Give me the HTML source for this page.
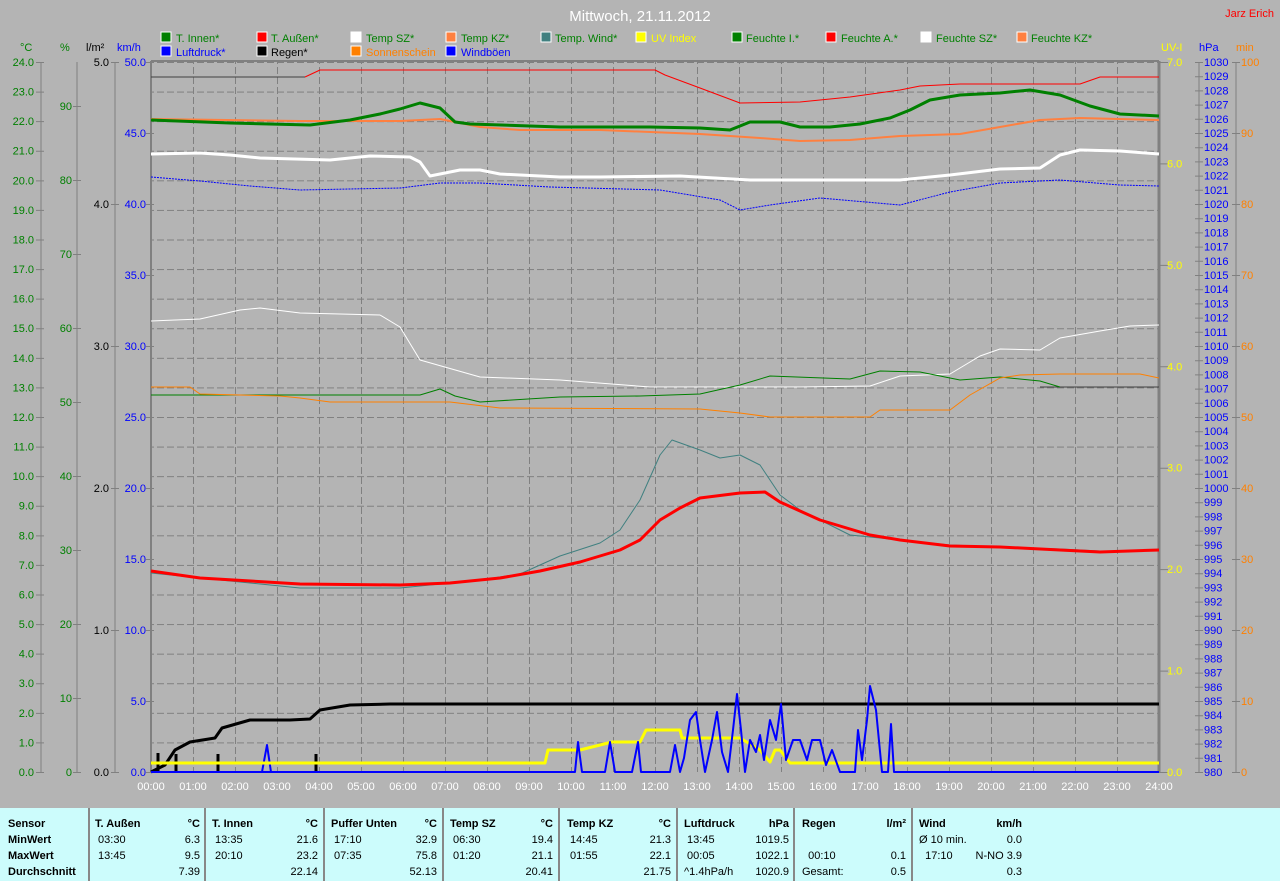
<!DOCTYPE html>
<html><head><meta charset="utf-8"><style>
body{margin:0;width:1280px;height:881px;background:#b4b4b4;overflow:hidden;font-family:"Liberation Sans",sans-serif}
svg{position:absolute;left:0;top:0}
#tbl{position:absolute;left:0;top:808px;width:1280px;height:73px;background:#ccfcfc;font-size:11px;color:#000}
.c{position:absolute;top:0;height:73px;border-right:2px solid #888}
.r{position:absolute;white-space:nowrap}
b{font-weight:bold}
</style></head><body>
<svg width="1280" height="808" font-family="Liberation Sans, sans-serif" font-size="11">
<defs>
<pattern id="gv" x="151" y="0" width="42" height="10" patternUnits="userSpaceOnUse"><line x1="0.5" y1="0" x2="0.5" y2="10" stroke="#808080" stroke-dasharray="4 3"/></pattern>
<pattern id="gh" x="0" y="62" width="10" height="29.583" patternUnits="userSpaceOnUse"><line x1="0" y1="0.5" x2="10" y2="0.5" stroke="#808080" stroke-dasharray="4 3"/></pattern>
</defs>
<rect x="152" y="62" width="1006" height="710" fill="url(#gv)"/>
<rect x="152" y="62" width="1006" height="710" fill="url(#gh)"/>
<line x1="151" y1="61" x2="1159" y2="61" stroke="#808080" stroke-width="2"/>
<line x1="151" y1="61" x2="151" y2="773" stroke="#808080" stroke-width="2"/>
<line x1="1159" y1="61" x2="1159" y2="773" stroke="#808080" stroke-width="3"/>
<!-- axes -->
<g stroke="#808080">
<line x1="41" y1="62" x2="41" y2="772"/><line x1="40" y1="62" x2="40" y2="773" stroke-width="8" stroke-dasharray="1 28.583"/>
<line x1="77" y1="62" x2="77" y2="772"/><line x1="77" y1="106" x2="77" y2="773" stroke-width="8" stroke-dasharray="1 73"/>
<line x1="115" y1="62" x2="115" y2="772"/><line x1="115" y1="62" x2="115" y2="773" stroke-width="8" stroke-dasharray="1 141"/>
<line x1="150" y1="62" x2="150" y2="773" stroke-width="8" stroke-dasharray="1 70"/>
<line x1="1164" y1="62" x2="1164" y2="773" stroke-width="8" stroke-dasharray="1 100.43"/>
<line x1="1199" y1="62" x2="1199" y2="772"/><line x1="1199" y1="62" x2="1199" y2="773" stroke-width="8" stroke-dasharray="1 13.2"/>
<line x1="1236" y1="62" x2="1236" y2="772"/><line x1="1236" y1="62" x2="1236" y2="773" stroke-width="8" stroke-dasharray="1 70"/>
</g>
<text x="640" y="21" fill="#fff" font-size="15" text-anchor="middle">Mittwoch, 21.11.2012</text>
<text x="1274" y="17" fill="#f00" text-anchor="end">Jarz Erich</text>
<text y="51" font-size="11"><tspan x="20" fill="#008000">°C</tspan><tspan x="60" fill="#008000">%</tspan><tspan x="86" fill="#000">l/m²</tspan><tspan x="117" fill="#00f">km/h</tspan><tspan x="1161" fill="#ff0">UV-I</tspan><tspan x="1199" fill="#00f">hPa</tspan><tspan x="1236" fill="#ff8000">min</tspan></text>
<!-- legend -->
<g stroke="#fff" stroke-width="1">
<rect x="161" y="32" width="10" height="10" fill="#008000"/><rect x="257" y="32" width="10" height="10" fill="#f00"/><rect x="351" y="32" width="10" height="10" fill="#fff"/><rect x="446" y="32" width="10" height="10" fill="#ff8040"/><rect x="541" y="32" width="10" height="10" fill="#408080"/><rect x="636" y="32" width="10" height="10" fill="#ff0"/><rect x="732" y="32" width="10" height="10" fill="#008000"/><rect x="826" y="32" width="10" height="10" fill="#f00"/><rect x="921" y="32" width="10" height="10" fill="#fff"/><rect x="1017" y="32" width="10" height="10" fill="#ff8040"/>
<rect x="161" y="46" width="10" height="10" fill="#00f"/><rect x="257" y="46" width="10" height="10" fill="#000"/><rect x="351" y="46" width="10" height="10" fill="#ff8000"/><rect x="446" y="46" width="10" height="10" fill="#00f"/>
</g>
<text y="42" fill="#008000"><tspan x="176">T. Innen*</tspan><tspan x="271">T. Außen*</tspan><tspan x="366">Temp SZ*</tspan><tspan x="461">Temp KZ*</tspan><tspan x="555">Temp. Wind*</tspan><tspan x="651" fill="#ff0">UV Index</tspan><tspan x="746">Feuchte I.*</tspan><tspan x="841">Feuchte A.*</tspan><tspan x="936">Feuchte SZ*</tspan><tspan x="1031">Feuchte KZ*</tspan></text>
<text y="56"><tspan x="176" fill="#00f">Luftdruck*</tspan><tspan x="271" fill="#000">Regen*</tspan><tspan x="366" fill="#ff8000">Sonnenschein</tspan><tspan x="461" fill="#00f">Windböen</tspan></text>
<!-- axis labels -->
<text fill="#008000" text-anchor="end" y="66"><tspan x="34">24.0</tspan><tspan x="34" dy="29.583">23.0</tspan><tspan x="34" dy="29.583">22.0</tspan><tspan x="34" dy="29.583">21.0</tspan><tspan x="34" dy="29.583">20.0</tspan><tspan x="34" dy="29.583">19.0</tspan><tspan x="34" dy="29.583">18.0</tspan><tspan x="34" dy="29.583">17.0</tspan><tspan x="34" dy="29.583">16.0</tspan><tspan x="34" dy="29.583">15.0</tspan><tspan x="34" dy="29.583">14.0</tspan><tspan x="34" dy="29.583">13.0</tspan><tspan x="34" dy="29.583">12.0</tspan><tspan x="34" dy="29.583">11.0</tspan><tspan x="34" dy="29.583">10.0</tspan><tspan x="34" dy="29.583">9.0</tspan><tspan x="34" dy="29.583">8.0</tspan><tspan x="34" dy="29.583">7.0</tspan><tspan x="34" dy="29.583">6.0</tspan><tspan x="34" dy="29.583">5.0</tspan><tspan x="34" dy="29.583">4.0</tspan><tspan x="34" dy="29.583">3.0</tspan><tspan x="34" dy="29.583">2.0</tspan><tspan x="34" dy="29.583">1.0</tspan><tspan x="34" dy="29.583">0.0</tspan></text>
<text fill="#008000" text-anchor="end" y="110"><tspan x="72">90</tspan><tspan x="72" dy="74">80</tspan><tspan x="72" dy="74">70</tspan><tspan x="72" dy="74">60</tspan><tspan x="72" dy="74">50</tspan><tspan x="72" dy="74">40</tspan><tspan x="72" dy="74">30</tspan><tspan x="72" dy="74">20</tspan><tspan x="72" dy="74">10</tspan><tspan x="72" dy="74">0</tspan></text>
<text fill="#000" text-anchor="end" y="66"><tspan x="109">5.0</tspan><tspan x="109" dy="142">4.0</tspan><tspan x="109" dy="142">3.0</tspan><tspan x="109" dy="142">2.0</tspan><tspan x="109" dy="142">1.0</tspan><tspan x="109" dy="142">0.0</tspan></text>
<text fill="#00f" text-anchor="end" y="66"><tspan x="146">50.0</tspan><tspan x="146" dy="71">45.0</tspan><tspan x="146" dy="71">40.0</tspan><tspan x="146" dy="71">35.0</tspan><tspan x="146" dy="71">30.0</tspan><tspan x="146" dy="71">25.0</tspan><tspan x="146" dy="71">20.0</tspan><tspan x="146" dy="71">15.0</tspan><tspan x="146" dy="71">10.0</tspan><tspan x="146" dy="71">5.0</tspan><tspan x="146" dy="71">0.0</tspan></text>
<text fill="#ff0" y="66"><tspan x="1167">7.0</tspan><tspan x="1167" dy="101.43">6.0</tspan><tspan x="1167" dy="101.43">5.0</tspan><tspan x="1167" dy="101.43">4.0</tspan><tspan x="1167" dy="101.43">3.0</tspan><tspan x="1167" dy="101.43">2.0</tspan><tspan x="1167" dy="101.43">1.0</tspan><tspan x="1167" dy="101.43">0.0</tspan></text>
<text fill="#ff8000" y="66"><tspan x="1241">100</tspan><tspan x="1241" dy="71">90</tspan><tspan x="1241" dy="71">80</tspan><tspan x="1241" dy="71">70</tspan><tspan x="1241" dy="71">60</tspan><tspan x="1241" dy="71">50</tspan><tspan x="1241" dy="71">40</tspan><tspan x="1241" dy="71">30</tspan><tspan x="1241" dy="71">20</tspan><tspan x="1241" dy="71">10</tspan><tspan x="1241" dy="71">0</tspan></text>
<text fill="#00f" y="66" font-size="11"><tspan x="1204">1030</tspan><tspan x="1204" dy="14.2">1029</tspan><tspan x="1204" dy="14.2">1028</tspan><tspan x="1204" dy="14.2">1027</tspan><tspan x="1204" dy="14.2">1026</tspan><tspan x="1204" dy="14.2">1025</tspan><tspan x="1204" dy="14.2">1024</tspan><tspan x="1204" dy="14.2">1023</tspan><tspan x="1204" dy="14.2">1022</tspan><tspan x="1204" dy="14.2">1021</tspan><tspan x="1204" dy="14.2">1020</tspan><tspan x="1204" dy="14.2">1019</tspan><tspan x="1204" dy="14.2">1018</tspan><tspan x="1204" dy="14.2">1017</tspan><tspan x="1204" dy="14.2">1016</tspan><tspan x="1204" dy="14.2">1015</tspan><tspan x="1204" dy="14.2">1014</tspan><tspan x="1204" dy="14.2">1013</tspan><tspan x="1204" dy="14.2">1012</tspan><tspan x="1204" dy="14.2">1011</tspan><tspan x="1204" dy="14.2">1010</tspan><tspan x="1204" dy="14.2">1009</tspan><tspan x="1204" dy="14.2">1008</tspan><tspan x="1204" dy="14.2">1007</tspan><tspan x="1204" dy="14.2">1006</tspan><tspan x="1204" dy="14.2">1005</tspan><tspan x="1204" dy="14.2">1004</tspan><tspan x="1204" dy="14.2">1003</tspan><tspan x="1204" dy="14.2">1002</tspan><tspan x="1204" dy="14.2">1001</tspan><tspan x="1204" dy="14.2">1000</tspan><tspan x="1204" dy="14.2">999</tspan><tspan x="1204" dy="14.2">998</tspan><tspan x="1204" dy="14.2">997</tspan><tspan x="1204" dy="14.2">996</tspan><tspan x="1204" dy="14.2">995</tspan><tspan x="1204" dy="14.2">994</tspan><tspan x="1204" dy="14.2">993</tspan><tspan x="1204" dy="14.2">992</tspan><tspan x="1204" dy="14.2">991</tspan><tspan x="1204" dy="14.2">990</tspan><tspan x="1204" dy="14.2">989</tspan><tspan x="1204" dy="14.2">988</tspan><tspan x="1204" dy="14.2">987</tspan><tspan x="1204" dy="14.2">986</tspan><tspan x="1204" dy="14.2">985</tspan><tspan x="1204" dy="14.2">984</tspan><tspan x="1204" dy="14.2">983</tspan><tspan x="1204" dy="14.2">982</tspan><tspan x="1204" dy="14.2">981</tspan><tspan x="1204" dy="14.2">980</tspan></text>
<text fill="#fff" text-anchor="middle" y="790"><tspan x="151">00:00</tspan><tspan x="193">01:00</tspan><tspan x="235">02:00</tspan><tspan x="277">03:00</tspan><tspan x="319">04:00</tspan><tspan x="361">05:00</tspan><tspan x="403">06:00</tspan><tspan x="445">07:00</tspan><tspan x="487">08:00</tspan><tspan x="529">09:00</tspan><tspan x="571">10:00</tspan><tspan x="613">11:00</tspan><tspan x="655">12:00</tspan><tspan x="697">13:00</tspan><tspan x="739">14:00</tspan><tspan x="781">15:00</tspan><tspan x="823">16:00</tspan><tspan x="865">17:00</tspan><tspan x="907">18:00</tspan><tspan x="949">19:00</tspan><tspan x="991">20:00</tspan><tspan x="1033">21:00</tspan><tspan x="1075">22:00</tspan><tspan x="1117">23:00</tspan><tspan x="1159">24:00</tspan></text>
<!-- curves -->
<g fill="none" stroke-linejoin="round">
<polyline stroke="#404040" points="151,77 305,77"/>
<polyline stroke="#f00" points="305,77 320,70 655,70 665,75 700,88 740,103 800,102 850,97 900,90 920,86 960,84 1080,84 1100,77 1159,77"/>
<polyline stroke="#ff8040" stroke-width="2" points="151,119 300,121 400,121 440,119 480,127 520,130 600,130 700,134 760,138 800,141 850,140 900,136 960,134 1000,127 1040,120 1080,118 1159,120"/>
<polyline stroke="#008000" stroke-width="3" points="151,120 230,123 310,125 350,120 380,114 400,109 420,103 440,108 455,122 470,124 560,127 650,127 700,128 730,130 750,122 780,122 800,127 830,127 860,124 890,118 910,110 930,100 960,95 1000,93 1030,90 1060,95 1090,106 1120,114 1159,116"/>
<polyline stroke="#fff" stroke-width="3" points="151,154 200,153 230,155 260,158 330,160 370,156 410,157 420,162 430,176 460,170 480,170 500,174 560,177 600,177 680,176 750,180 800,180 900,180 950,175 1000,169 1040,168 1060,155 1080,150 1120,151 1159,154"/>
<polyline stroke="#00f" stroke-dasharray="2 1" points="151,177 200,181 250,186 300,190 400,188 440,183 480,183 550,187 660,190 720,200 740,210 770,205 820,198 900,205 950,192 1000,183 1060,180 1120,185 1159,186"/>
<polyline stroke="#fff" points="151,321 200,319 240,310 260,308 300,313 380,315 400,327 420,360 480,377 560,380 650,387 800,387 870,386 900,376 950,374 980,356 1000,349 1040,350 1060,338 1100,331 1130,326 1159,325"/>
<polyline stroke="#404040" points="1040,387 1159,387"/>
<polyline stroke="#008000" points="151,395 420,395 440,389 455,396 480,402 560,397 640,396 700,394 740,385 770,376 850,379 880,371 920,372 960,380 1000,377 1040,381 1060,387"/>
<polyline stroke="#ff8000" points="151,387 190,387 200,394 280,396 300,398 330,402 450,402 500,408 700,409 740,413 770,417 870,417 880,410 950,410 970,395 1000,378 1020,375 1060,374 1140,374 1159,378"/>
<polyline stroke="#408080" points="151,573 200,578 300,588 400,588 480,580 520,574 560,556 600,543 620,530 640,500 660,455 672,440 700,450 720,458 740,455 760,465 780,495 800,510 850,535 900,540 950,545 1000,547 1060,549 1120,552 1159,550"/>
<polyline stroke="#f00" stroke-width="3" points="151,571 200,578 300,584 400,585 450,583 500,578 540,571 580,562 620,550 640,540 660,520 680,508 700,498 740,493 765,492 780,502 820,520 870,535 900,540 950,546 1000,547 1060,550 1100,552 1159,550"/>
<polyline stroke="#000" stroke-width="3" points="151,772 165,765 175,750 190,742 215,738 222,728 250,720 290,720 310,719 320,710 350,705 390,704 1159,704"/>
<g stroke="#000" stroke-width="3"><line x1="158" y1="753" x2="158" y2="772"/><line x1="176" y1="754" x2="176" y2="772"/><line x1="218" y1="754" x2="218" y2="772"/><line x1="316" y1="754" x2="316" y2="772"/></g>
<polyline stroke="#00f" stroke-width="2" points="262,772 267,745 271,772"/>
<polyline stroke="#ff0" stroke-width="3" points="151,763 545,763 548,750 575,750 580,750 612,742 640,742 646,730 680,730 682,738 740,738 760,750 770,762 775,750 780,750 790,763 1159,763"/>
<polyline stroke="#00f" stroke-width="2" points="151,772 575,772 578,742 582,772 605,772 610,742 615,772 632,772 638,742 641,772 670,772 675,745 680,772 684,758 690,720 696,712 700,740 705,772 712,740 717,712 722,752 728,772 733,730 737,694 741,730 745,772 750,740 756,752 760,735 764,760 770,720 776,740 781,704 786,760 793,740 800,740 807,760 812,740 820,740 826,765 832,750 840,772 855,772 858,730 862,760 867,720 870,686 876,710 882,772 888,772 891,724 894,772 1159,772"/>
</g>
</svg>
<div id="tbl">
<div class="c" style="left:0;width:88px"></div><div class="c" style="left:90px;width:114px"></div><div class="c" style="left:206px;width:117px"></div><div class="c" style="left:325px;width:117px"></div><div class="c" style="left:444px;width:114px"></div><div class="c" style="left:560px;width:116px"></div><div class="c" style="left:678px;width:115px"></div><div class="c" style="left:795px;width:116px"></div>
<div class="r" style="left:8px;top:8px;line-height:16px"><b>Sensor</b><br><b>MinWert</b><br><b>MaxWert</b><br><b>Durchschnitt</b></div>
<div class="r" style="left:95px;top:8px;line-height:16px"><b>T. Außen</b><br>&nbsp;03:30<br>&nbsp;13:45</div>
<div class="r" style="right:1080px;top:8px;line-height:16px;text-align:right"><b>°C</b><br>6.3<br>9.5<br>7.39</div>
<div class="r" style="left:212px;top:8px;line-height:16px"><b>T. Innen</b><br>&nbsp;13:35<br>&nbsp;20:10</div>
<div class="r" style="right:962px;top:8px;line-height:16px;text-align:right"><b>°C</b><br>21.6<br>23.2<br>22.14</div>
<div class="r" style="left:331px;top:8px;line-height:16px"><b>Puffer Unten</b><br>&nbsp;17:10<br>&nbsp;07:35</div>
<div class="r" style="right:843px;top:8px;line-height:16px;text-align:right"><b>°C</b><br>32.9<br>75.8<br>52.13</div>
<div class="r" style="left:450px;top:8px;line-height:16px"><b>Temp SZ</b><br>&nbsp;06:30<br>&nbsp;01:20</div>
<div class="r" style="right:727px;top:8px;line-height:16px;text-align:right"><b>°C</b><br>19.4<br>21.1<br>20.41</div>
<div class="r" style="left:567px;top:8px;line-height:16px"><b>Temp KZ</b><br>&nbsp;14:45<br>&nbsp;01:55</div>
<div class="r" style="right:609px;top:8px;line-height:16px;text-align:right"><b>°C</b><br>21.3<br>22.1<br>21.75</div>
<div class="r" style="left:684px;top:8px;line-height:16px"><b>Luftdruck</b><br>&nbsp;13:45<br>&nbsp;00:05<br>^1.4hPa/h</div>
<div class="r" style="right:491px;top:8px;line-height:16px;text-align:right"><b>hPa</b><br>1019.5<br>1022.1<br>1020.9</div>
<div class="r" style="left:802px;top:8px;line-height:16px"><b>Regen</b><br>&nbsp;<br>&nbsp;&nbsp;00:10<br>Gesamt:</div>
<div class="r" style="right:374px;top:8px;line-height:16px;text-align:right"><b>l/m²</b><br>&nbsp;<br>0.1<br>0.5</div>
<div class="r" style="left:919px;top:8px;line-height:16px"><b>Wind</b><br>Ø 10 min.<br>&nbsp;&nbsp;17:10</div>
<div class="r" style="right:258px;top:8px;line-height:16px;text-align:right"><b>km/h</b><br>0.0<br>N-NO 3.9<br>0.3</div>
</div>
</body></html>
